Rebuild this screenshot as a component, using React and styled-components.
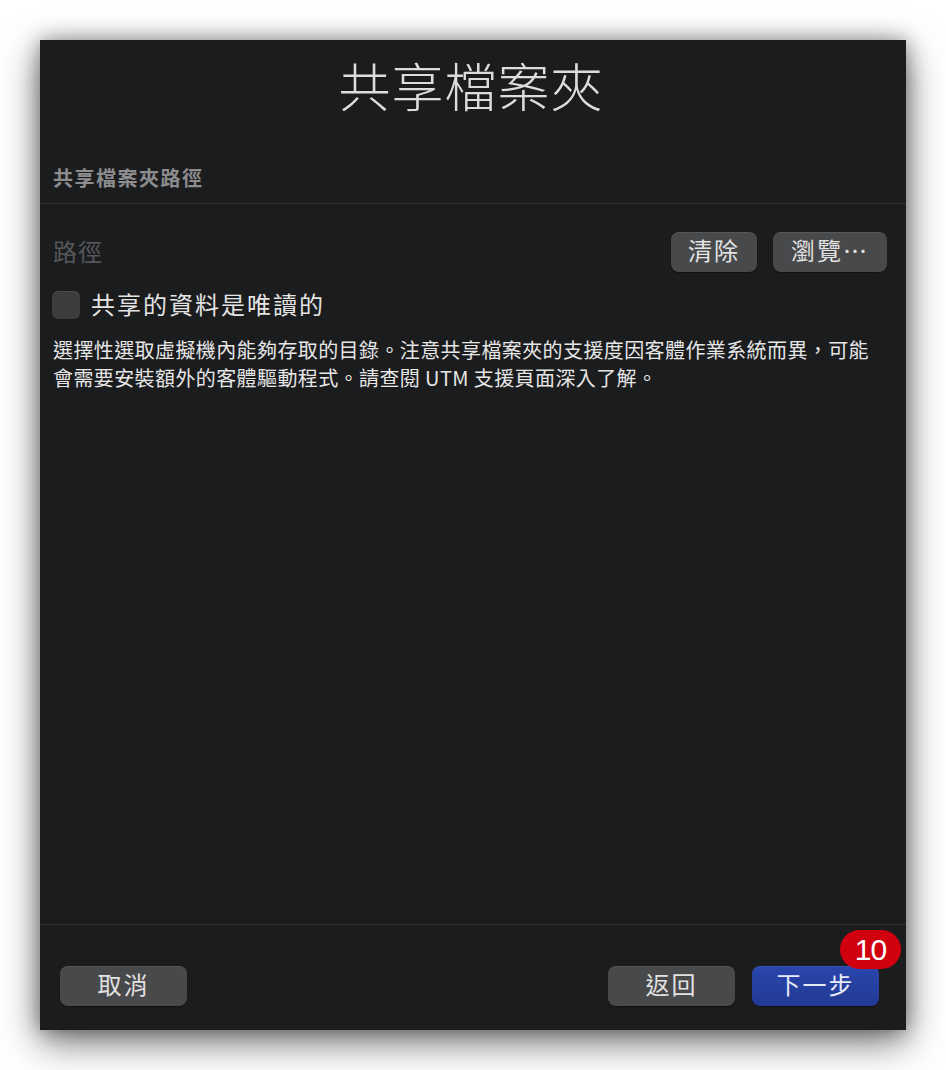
import React from "react";
import styled, { createGlobalStyle } from "styled-components";

const GlobalStyle = createGlobalStyle`
  html, body {
    margin: 0;
    padding: 0;
    background: #ffffff;
  }
  body {
    font-family: "Noto Sans CJK TC", "Noto Sans", "Liberation Sans", sans-serif;
  }
`;

function App() {
  return (
    <>
      <GlobalStyle />
      <Page>
        <Window>
          <Title>共享檔案夾</Title>
          <SectionHeader>共享檔案夾路徑</SectionHeader>
          <Body>
            <PathRow>
              <Placeholder>路徑</Placeholder>
              <Button width={86}>清除</Button>
              <Button width={114}>瀏覽⋯</Button>
            </PathRow>
            <CheckRow>
              <CheckBox />
              <CheckLabel>共享的資料是唯讀的</CheckLabel>
            </CheckRow>
            <Description>
              選擇性選取虛擬機內能夠存取的目錄。注意共享檔案夾的支援度因客體作業系統而異，可能會需要安裝額外的客體驅動程式。請查閱 UTM 支援頁面深入了解。
            </Description>
          </Body>
          <Footer>
            <Button width={127}>取消</Button>
            <Spacer />
            <Button width={127}>返回</Button>
            <NextWrap>
              <Button width={127} primary>下一步</Button>
              <Badge>10</Badge>
            </NextWrap>
          </Footer>
        </Window>
      </Page>
    </>
  );
}

export default App;

const Page = styled.div`
  width: 946px;
  height: 1070px;
  padding: 40px 0 0 40px;
  box-sizing: border-box;
`;

const Window = styled.div`
  width: 866px;
  height: 990px;
  background: #1b1c1e;
  box-shadow: 0 12px 36px rgba(0, 0, 0, 0.55), 0 0 18px rgba(0, 0, 0, 0.35);
  display: flex;
  flex-direction: column;
  box-sizing: border-box;
`;

const Title = styled.h1`
  margin: 0;
  padding: 11px 4px 0 0;
  height: 75px;
  text-align: center;
  font-size: 52px;
  font-weight: 300;
  line-height: 68px;
  color: #dcdcdc;
  letter-spacing: 1px;
`;

const SectionHeader = styled.div`
  padding: 36px 13px 0;
  height: 41px;
  font-size: 20px;
  font-weight: 700;
  color: #8d8d8f;
  letter-spacing: 1.5px;
  line-height: 32px;
  border-bottom: 1px solid #333436;
`;

const Body = styled.div`
  flex: 1;
  padding: 28px 19px 0 13px;
  display: flex;
  flex-direction: column;
`;

const PathRow = styled.div`
  display: flex;
  align-items: center;
  gap: 16px;
  height: 40px;
`;

const Placeholder = styled.div`
  flex: 1;
  font-size: 24px;
  color: #56575a;
  letter-spacing: 1px;
  padding-bottom: 3px;
`;

const Button = styled.div`
  width: ${(p) => p.width}px;
  height: 40px;
  box-sizing: border-box;
  padding-bottom: 5px;
  border-radius: 8px;
  display: flex;
  align-items: center;
  justify-content: center;
  font-size: 24px;
  font-weight: 400;
  letter-spacing: 2px;
  color: ${(p) => (p.primary ? "#e8ecf8" : "#e2e2e2")};
  background: ${(p) =>
    p.primary
      ? "linear-gradient(#2a46ad, #223a94)"
      : "#48494b"};
  box-shadow: 0 1px 1px rgba(0, 0, 0, 0.4), inset 0 1px 0 rgba(255, 255, 255, 0.08);
`;

const CheckRow = styled.div`
  display: flex;
  align-items: center;
  gap: 11px;
  margin-top: 19px;
  height: 28px;
`;

const CheckBox = styled.div`
  width: 28px;
  height: 28px;
  margin-left: -1px;
  border-radius: 6px;
  background: #3b3c3e;
  box-shadow: inset 0 1px 0 rgba(255, 255, 255, 0.08);
`;

const CheckLabel = styled.div`
  font-size: 24px;
  font-weight: 400;
  color: #e4e4e4;
  letter-spacing: 2px;
  padding-bottom: 3px;
`;

const Description = styled.p`
  margin: 17px 0 0;
  font-size: 20px;
  font-weight: 400;
  line-height: 28px;
  color: #e6e6e6;
  letter-spacing: 0.4px;
  padding-right: 18px;
`;

const Footer = styled.div`
  height: 106px;
  box-sizing: border-box;
  border-top: 1px solid #333436;
  padding: 41px 27px 0 20px;
  display: flex;
  align-items: flex-start;
  gap: 17px;
`;

const Spacer = styled.div`
  flex: 1;
`;

const NextWrap = styled.div`
  position: relative;
`;

const Badge = styled.div`
  position: absolute;
  top: -36px;
  left: 88px;
  width: 61px;
  height: 39px;
  border-radius: 20px;
  background: #d0000f;
  color: #ffffff;
  font-family: "Liberation Sans", "Noto Sans", sans-serif;
  font-size: 30px;
  line-height: 39px;
  text-align: center;
  letter-spacing: -1px;
`;
